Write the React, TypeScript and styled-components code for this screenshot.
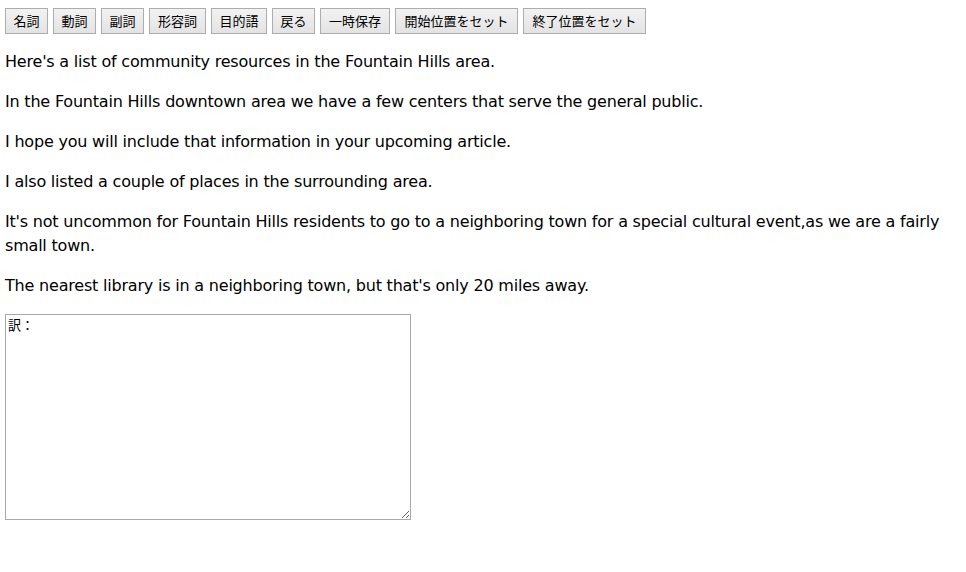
import React from "react";
import styled, { createGlobalStyle } from "styled-components";

const Global = createGlobalStyle`
  html, body { margin: 0; padding: 0; background: #fff; }
  body { padding: 8px 5px 0 5px; }
`;

const Toolbar = styled.div`
  display: flex;
  gap: 5px;
  height: 26px;
`;

const Btn = styled.button<{ $w: number }>`
  box-sizing: border-box;
  width: ${(p) => p.$w}px;
  height: 26px;
  padding: 0;
  border: 1px solid #adadad;
  border-radius: 0;
  background: linear-gradient(#f2f2f2, #e3e3e3);
  color: #000;
  font-family: "Noto Sans CJK JP", "DejaVu Sans", sans-serif;
  font-size: 13px;
  line-height: 24px;
  cursor: default;
`;

const Para = styled.p`
  margin: 16px 0 0 0;
  font-family: "DejaVu Sans", sans-serif;
  font-size: 16px;
  letter-spacing: -0.2px;
  line-height: 24px;
  color: #000;
`;

const Area = styled.textarea`
  display: block;
  box-sizing: border-box;
  margin-top: 16px;
  width: 406px;
  height: 206px;
  border: 1px solid #a9a9a9;
  padding: 2px;
  font-family: "Noto Sans CJK JP", monospace;
  font-size: 13px;
  line-height: 15px;
  color: #000;
  resize: both;
  outline: none;
`;

const buttons: [string, number][] = [
  ["名詞", 43],
  ["動詞", 43],
  ["副詞", 43],
  ["形容詞", 57],
  ["目的語", 56],
  ["戻る", 43],
  ["一時保存", 70],
  ["開始位置をセット", 123],
  ["終了位置をセット", 123],
];

const paras = [
  "Here's a list of community resources in the Fountain Hills area.",
  "In the Fountain Hills downtown area we have a few centers that serve the general public.",
  "I hope you will include that information in your upcoming article.",
  "I also listed a couple of places in the surrounding area.",
  "It's not uncommon for Fountain Hills residents to go to a neighboring town for a special cultural event,as we are a fairly small town.",
  "The nearest library is in a neighboring town, but that's only 20 miles away.",
];

export default function App() {
  return (
    <>
      <Global />
      <Toolbar>
        {buttons.map(([t, w]) => (
          <Btn key={t} $w={w}>{t}</Btn>
        ))}
      </Toolbar>
      {paras.map((p) => (
        <Para key={p}>{p}</Para>
      ))}
      <Area defaultValue="訳：" />
    </>
  );
}
